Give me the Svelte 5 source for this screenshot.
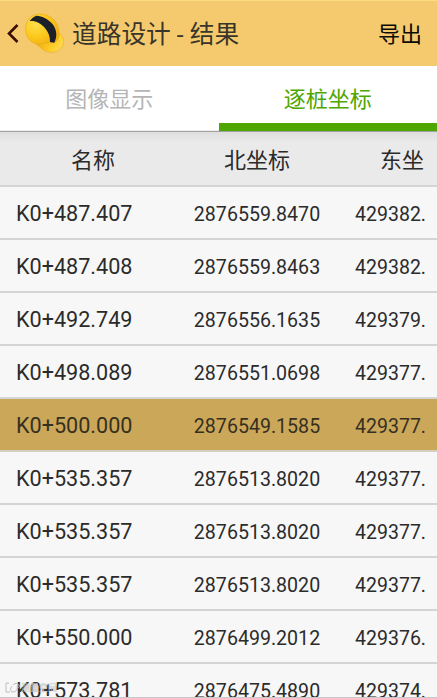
<script lang="ts">
  type Stake = { name: string; north: string; east: string }

  const tabs = ['图像显示', '逐桩坐标']
  let activeTab = $state(1)
  let selected = $state(4)

  const stakes: Stake[] = [
    { name: 'K0+487.407', north: '2876559.8470', east: '429382.' },
    { name: 'K0+487.408', north: '2876559.8463', east: '429382.' },
    { name: 'K0+492.749', north: '2876556.1635', east: '429379.' },
    { name: 'K0+498.089', north: '2876551.0698', east: '429377.' },
    { name: 'K0+500.000', north: '2876549.1585', east: '429377.' },
    { name: 'K0+535.357', north: '2876513.8020', east: '429377.' },
    { name: 'K0+535.357', north: '2876513.8020', east: '429377.' },
    { name: 'K0+535.357', north: '2876513.8020', east: '429377.' },
    { name: 'K0+550.000', north: '2876499.2012', east: '429376.' },
    { name: 'K0+573.781', north: '2876475.4890', east: '429374.' },
  ]
</script>

<div class="screen">
  <header class="title-bar">
    <svg class="back" viewBox="0 0 12 20" width="12" height="20">
      <path d="M10.500 1 2 9.500l8.500 8.500" fill="none" stroke="#3a0d08" stroke-width="2.600" />
    </svg>
    <svg class="helmet" viewBox="0 0 150 150" width="50" height="50">
      <defs>
        <radialGradient id="shell" cx="0.3" cy="0.35" r="0.75">
          <stop offset="0" stop-color="#ffdf4a" />
          <stop offset="0.55" stop-color="#fcc81c" />
          <stop offset="1" stop-color="#f2b012" />
        </radialGradient>
        <linearGradient id="brim" x1="0" y1="0.3" x2="1" y2="0.7">
          <stop offset="0" stop-color="#eda20c" />
          <stop offset="0.6" stop-color="#fdc922" />
          <stop offset="1" stop-color="#ffdc55" />
        </linearGradient>
      </defs>
      <path d="M114 70C126 76 133 88 131 101 129 118 115 128 97 130 82 131 70 124 60 114L42 100Z" fill="url(#brim)" stroke="#dfa224" stroke-width="1.500" />
      <path d="M24 87C12 68 15 39 32 24 48 12 74 12 93 25 112 39 121 62 116 84 113 98 103 102 90 101 76 101 65 106 54 105 41 104 31 98 24 87Z" fill="url(#shell)" stroke="#e2a51d" stroke-width="1.500" />
      <path d="M29 36C34 29 40 24 49 20 67 20 86 31 98 46 110 62 113 82 103 101L90 99C91 84 85 68 73 55 61 42 47 34 29 36Z" fill="#1b2029" />
    </svg>
    <h1>道路设计 - 结果</h1>
    <button class="export">导出</button>
  </header>

  <nav class="tabs">
    {#each tabs as tab, i}
      <button class="tab" class:active={activeTab === i} onclick={() => (activeTab = i)}>{tab}</button>
    {/each}
  </nav>

  <div class="row head">
    <span class="name">名称</span>
    <span class="north">北坐标</span>
    <span class="east">东坐</span>
  </div>

  <div class="list">
    {#each stakes as stake, i}
      <div class="row" class:selected={selected === i}>
        <span class="name">{stake.name}</span>
        <span class="north">{stake.north}</span>
        <span class="east">{stake.east}</span>
      </div>
    {/each}
  </div>

  <div class="watermark">
    <svg viewBox="0 0 16 12" width="16" height="12">
      <path d="M1 1v9h4M1 1h3M7 4c-2 2-2 6 1 6s5-3 4-6M8 3c1-2 5-2 6 0s-1 3-2 3" fill="none" stroke="#bdbdbd" stroke-width="1" />
    </svg>
    <span>测量空间</span>
  </div>
</div>

<style>
  :global(body) {
    margin: 0;
  }

  .screen {
    position: relative;
    display: flex;
    flex-direction: column;
    box-sizing: border-box;
    width: 437px;
    height: 698px;
    overflow: hidden;
    background: #f7f7f7;
    border-bottom: 1px solid #c8c8c8;
    color: #2b2b2b;
    font-family: Roboto, 'Noto Sans CJK SC', sans-serif;
  }

  button {
    padding: 0;
    border: 0;
    background: none;
    font-family: inherit;
  }

  .title-bar {
    display: flex;
    flex: none;
    align-items: center;
    box-sizing: border-box;
    height: 66px;
    padding: 0 15px 0 8px;
    background: #f5ca6e;
    border-top: 1px solid #fbdc80;
  }

  .back {
    margin-left: -1px;
    margin-right: 1px;
  }

  h1 {
    margin: 0 auto 0 2px;
    padding-top: 2px;
    color: #38352a;
    font-size: 24.700px;
    font-weight: 400;
    line-height: 36px;
  }

  .export {
    padding-bottom: 4px;
    color: #0c0a06;
    font-size: 22px;
  }

  .tabs {
    display: flex;
    flex: none;
    height: 66px;
    box-sizing: border-box;
    background: #fff;
    border-bottom: 1px solid #a2a2a2;
  }

  .tab {
    flex: 1;
    box-sizing: border-box;
    padding-bottom: 2px;
    border-bottom: 1px solid #ececec;
    color: #b5b5b5;
    font-size: 22px;
  }

  .tab.active {
    border-bottom: 8px solid #50a600;
    padding: 5px 0 0;
    color: #50a600;
  }

  .row {
    display: flex;
    flex: none;
    align-items: center;
    box-sizing: border-box;
    height: 53px;
    padding-top: 3px;
    border-bottom: 2px solid #d4d4d4;
    white-space: nowrap;
  }

  .row.selected {
    background: #cba75a;
    border-bottom-color: #d6cfbf;
    color: #35301f;
  }

  .row.head {
    height: 55px;
    padding: 0 0 2px;
    background: linear-gradient(#dedede, #eaeaea 10px);
  }

  .name {
    width: 170px;
    padding: 0 0 2px 16px;
    font-size: 21.600px;
  }

  .north {
    width: 142px;
    padding-top: 1px;
    text-align: center;
    font-size: 19.600px;
  }

  .east {
    width: 98px;
    padding-top: 1px;
    text-align: right;
    font-size: 19.500px;
  }

  .head span {
    padding-top: 0;
    font-size: 22px;
  }

  .head .name {
    padding: 0;
    width: 186px;
    text-align: center;
  }

  .head .east {
    width: 96px;
  }

  .watermark {
    position: absolute;
    left: 5px;
    bottom: 3px;
    display: flex;
    align-items: center;
    color: rgba(255, 255, 255, 0.6);
    font-size: 9px;
    line-height: 12px;
    text-shadow: 0 0 1px #888;
  }
</style>
